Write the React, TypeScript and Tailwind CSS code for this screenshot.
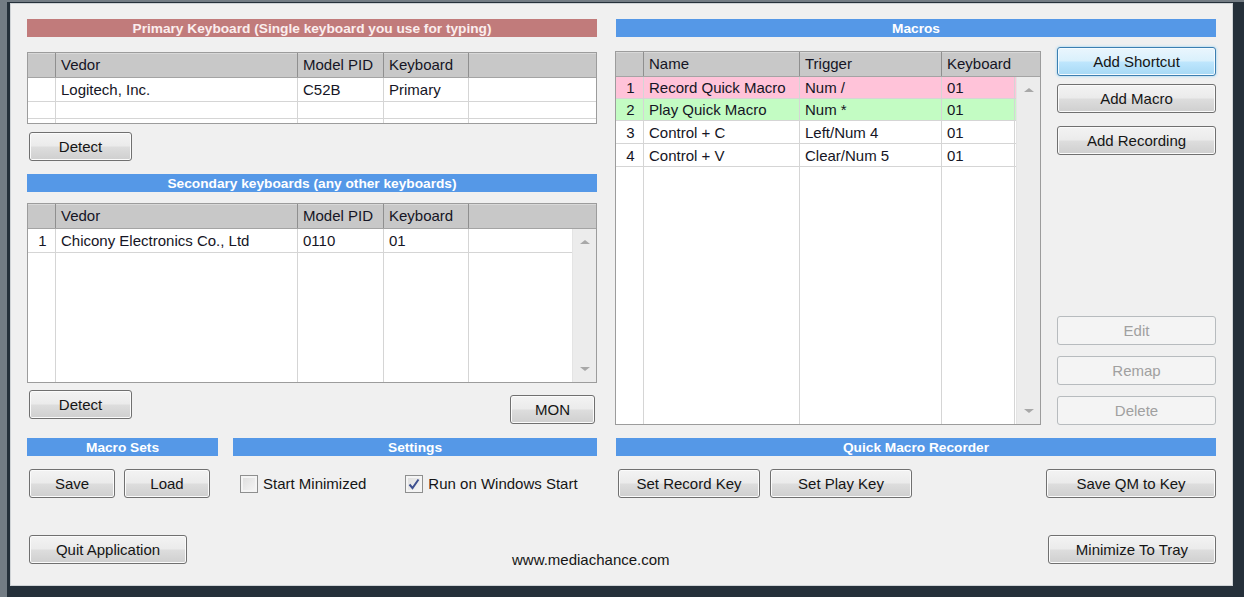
import React from "react";

type Row = { cells: string[]; bg?: string; h?: number };

const cellLine = "border-[#d5d5d5]";

function Band({ title, red, className = "" }: { title: string; red?: boolean; className?: string }) {
  return (
    <div
      className={`h-[18px] pt-[2px] flex items-center justify-center font-bold text-[13.7px] leading-none ${
        red ? "bg-[#c17b7b] text-[#fbeeee]" : "bg-[#5598e7] text-white"
      } ${className}`}
    >
      {title}
    </div>
  );
}

function Btn({
  label,
  className = "",
  variant = "normal",
}: {
  label: string;
  className?: string;
  variant?: "normal" | "focus" | "disabled";
}) {
  const styles = {
    normal:
      "border-[#707070] bg-[linear-gradient(#f3f3f3_0%,#ebebeb_48%,#dddddd_52%,#cfcfcf_100%)] shadow-[inset_0_0_0_1px_#fbfbfb] text-[#151515]",
    focus:
      "border-[#3c7fb1] bg-[linear-gradient(#eaf6fd_0%,#d9f0fc_48%,#bee6fd_52%,#a7d9f5_100%)] shadow-[inset_0_0_0_1px_#f4fbff,0_0_3px_#8fd0f4] text-[#151515]",
    disabled: "border-[#b7bbbe] bg-[#f4f4f4] text-[#a0a0a0]",
  };
  return (
    <button
      className={`h-[29px] shrink-0 rounded-[3px] border flex items-center justify-center text-[15px] leading-none ${styles[variant]} ${className}`}
    >
      {label}
    </button>
  );
}

function Arrow({ up }: { up?: boolean }) {
  return up ? (
    <div className="w-0 h-0 border-x-[5px] border-x-transparent border-b-[4px] border-b-[#a8a8a8]" />
  ) : (
    <div className="w-0 h-0 border-x-[5px] border-x-transparent border-t-[4px] border-t-[#a8a8a8]" />
  );
}

function Table({
  widths,
  headWidths,
  headers,
  rows,
  className = "",
  scroll,
}: {
  widths: number[];
  headWidths?: number[];
  headers: string[];
  rows: Row[];
  className?: string;
  scroll?: boolean;
}) {
  const cols = [...widths, 0];
  const hcols = [...(headWidths ?? widths), 0];
  return (
    <div className={`border border-[#9c9c9c] bg-white flex flex-col overflow-hidden ${className}`}>
      <div className="h-[25px] shrink-0 flex bg-[#c8c8c8] border-b border-[#a4a4a4] shadow-[inset_0_1px_0_#d8d8d8]">
        {hcols.map((w, i) => (
          <div
            key={i}
            className={`h-full flex items-center pl-[5px] pt-[1px] text-[15px] text-[#151525] ${
              w ? "shrink-0 border-r border-[#8f8f8f]" : "flex-1"
            }`}
            style={w ? { width: w } : undefined}
          >
            {headers[i] ?? ""}
          </div>
        ))}
      </div>
      <div className="flex-1 flex min-h-0">
        <div className="flex-1 flex flex-col min-w-0">
          {rows.map((r, ri) => (
            <div
              key={ri}
              className={`flex shrink-0 border-b ${cellLine}`}
              style={{ height: r.h ?? 22, background: r.bg }}
            >
              {cols.map((w, i) => (
                <div
                  key={i}
                  className={`h-full flex items-center pt-[2px] text-[15px] text-[#151525] whitespace-nowrap overflow-hidden ${
                    i === 0 ? "justify-center pl-[2px]" : "pl-[5px]"
                  } ${w ? `shrink-0 border-r ${cellLine}` : "flex-1"}`}
                  style={w ? { width: w } : undefined}
                >
                  {r.cells[i] ?? ""}
                </div>
              ))}
            </div>
          ))}
          <div className="flex-1 flex">
            {cols.map((w, i) => (
              <div
                key={i}
                className={w ? `h-full shrink-0 border-r ${cellLine}` : "flex-1"}
                style={w ? { width: w } : undefined}
              />
            ))}
          </div>
        </div>
        {scroll && (
          <div className="w-[24px] shrink-0 bg-[#ececec] border-l border-[#e4e4e4] flex flex-col items-center justify-between py-[11px]">
            <Arrow up />
            <Arrow />
          </div>
        )}
      </div>
    </div>
  );
}

function Check({ label, checked, className = "" }: { label: string; checked?: boolean; className?: string }) {
  return (
    <label className={`flex items-center gap-[5px] text-[15px] text-[#151515] ${className}`}>
      <span className="w-[18px] h-[18px] border border-[#8e8f8f] bg-[linear-gradient(135deg,#dcdcdc,#f7f7f7)] shadow-[inset_0_0_0_2px_#f4f4f4] flex items-center justify-center">
        {checked && (
          <svg width="14" height="14" viewBox="0 0 14 14">
            <path d="M2.5 7.5 L5.5 11 L11.5 2.5" fill="none" stroke="#3d4f8f" strokeWidth="2" />
          </svg>
        )}
      </span>
      {label}
    </label>
  );
}

export default function App() {
  return (
    <div className="w-[1244px] h-[597px] bg-[#25303a] border-l-[7px] border-t-[2px] border-[#737c84] pl-[3px] pt-[1px] pr-[11px] pb-[11px] [font-family:'Liberation_Sans',Arial,sans-serif]">
      <div className="w-full h-full border border-[#cfd3d6] bg-[#f0f0f0] pl-[16px] pt-[15px] flex flex-col">
        {/* top area */}
        <div className="flex gap-[19px]">
          {/* left column */}
          <div className="w-[570px] flex flex-col">
            <Band title="Primary Keyboard (Single keyboard you use for typing)" red />
            <Table
              className="mt-[15px] h-[72px]"
              widths={[28, 242, 86, 85]}
              headers={["", "Vedor", "Model PID", "Keyboard"]}
              rows={[
                { cells: ["", "Logitech, Inc.", "C52B", "Primary"], h: 24 },
                { cells: [], h: 17 },
              ]}
            />
            <Btn label="Detect" className="mt-[8px] ml-[2px] w-[103px]" />
            <Band title="Secondary keyboards (any other keyboards)" className="mt-[13px]" />
            <Table
              className="mt-[11px] h-[180px]"
              widths={[28, 242, 86, 85]}
              headers={["", "Vedor", "Model PID", "Keyboard"]}
              rows={[{ cells: ["1", "Chicony Electronics Co., Ltd", "0110", "01"], h: 24 }]}
              scroll
            />
            <div className="mt-[7px] flex items-start justify-between">
              <Btn label="Detect" className="ml-[2px] w-[103px]" />
              <Btn label="MON" className="mt-[5px] mr-[2px] w-[85px]" />
            </div>
          </div>

          {/* right column */}
          <div className="w-[600px] flex flex-col">
            <Band title="Macros" />
            <div className="mt-[10px] flex items-start">
              <Table
                className="mt-[4px] -ml-[1px] w-[426px] h-[374px]"
                widths={[28, 156, 142, 73]}
                headWidths={[28, 156, 142]}
                headers={["", "Name", "Trigger", "Keyboard"]}
                rows={[
                  { cells: ["1", "Record Quick Macro", "Num /", "01"], bg: "#ffc3d9" },
                  { cells: ["2", "Play Quick Macro", "Num *", "01"], bg: "#c3fcc3" },
                  { cells: ["3", "Control + C", "Left/Num 4", "01"], h: 23 },
                  { cells: ["4", "Control + V", "Clear/Num 5", "01"], h: 23 },
                ]}
                scroll
              />
              <div className="ml-[16px] w-[159px] flex flex-col">
                <Btn label="Add Shortcut" variant="focus" />
                <Btn label="Add Macro" className="mt-[8px]" />
                <Btn label="Add Recording" className="mt-[13px]" />
                <Btn label="Edit" variant="disabled" className="mt-[161px]" />
                <Btn label="Remap" variant="disabled" className="mt-[11px]" />
                <Btn label="Delete" variant="disabled" className="mt-[11px]" />
              </div>
            </div>
          </div>
        </div>

        {/* bottom bands */}
        <div className="mt-[13px] flex gap-[19px]">
          <div className="w-[570px] flex gap-[15px]">
            <div className="w-[191px] flex flex-col">
              <Band title="Macro Sets" />
              <div className="mt-[13px] flex">
                <Btn label="Save" className="ml-[2px] w-[86px]" />
                <Btn label="Load" className="ml-[9px] w-[86px]" />
              </div>
            </div>
            <div className="w-[364px] flex flex-col">
              <Band title="Settings" />
              <div className="mt-[17px] flex">
                <Check label="Start Minimized" className="ml-[7px]" />
                <Check label="Run on Windows Start" checked className="ml-[39px]" />
              </div>
            </div>
          </div>
          <div className="w-[600px] flex flex-col">
            <Band title="Quick Macro Recorder" />
            <div className="mt-[13px] flex">
              <Btn label="Set Record Key" className="ml-[2px] w-[142px]" />
              <Btn label="Set Play Key" className="ml-[10px] w-[142px]" />
              <Btn label="Save QM to Key" className="ml-auto w-[170px]" />
            </div>
          </div>
        </div>

        {/* footer */}
        <div className="mt-[37px] flex items-start">
          <Btn label="Quit Application" className="ml-[2px] w-[158px]" />
          <span className="ml-[325px] mt-[14px] text-[15px] text-[#151515]">www.mediachance.com</span>
          <Btn label="Minimize To Tray" className="ml-auto mr-[16px] w-[168px]" />
        </div>
      </div>
    </div>
  );
}
